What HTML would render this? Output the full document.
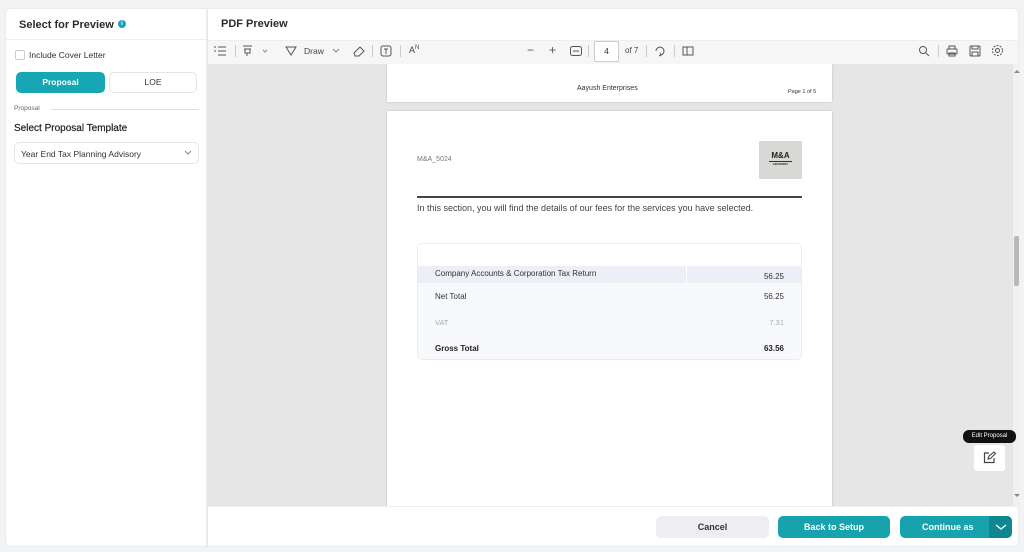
<!DOCTYPE html>
<html><head><meta charset="utf-8"><style>
*{box-sizing:border-box;margin:0;padding:0}
body{width:1024px;height:552px;background:#f2f3f5;font-family:"Liberation Sans",sans-serif;position:relative;overflow:hidden;color:#222}
.abs{position:absolute}
.left{left:5px;top:8px;width:202px;height:539px;background:#fff;border:1px solid #e9ebee;border-radius:6px 0 0 6px}
.right{left:207px;top:8px;width:812px;height:539px;background:#fff;border:1px solid #e9ebee;border-left:1px solid #e6e8eb;border-radius:0 6px 6px 0}
.btn{position:absolute;top:516px;height:22px;border-radius:5px;font-size:9px;font-weight:bold;display:flex;align-items:center;justify-content:center}
svg{position:absolute}
</style></head><body>
<div class="abs left">
  <div style="position:absolute;left:0;top:0;width:200px;height:31px;border-bottom:1px solid #eceef1"></div>
  <div class="abs" style="left:13px;top:10px;font-size:11px;font-weight:bold;color:#2b2b2b">Select for Preview</div>
  <div class="abs" style="left:112px;top:11px;width:8px;height:8px;border-radius:50%;background:#17a2b8;color:#fff;font-size:6px;font-weight:bold;text-align:center;line-height:8px">i</div>
  <div class="abs" style="left:9px;top:41px;width:10px;height:10px;border:1px solid #ccc;border-radius:2px"></div>
  <div class="abs" style="left:23px;top:41px;font-size:8.5px;color:#333">Include Cover Letter</div>
  <div class="abs" style="left:10px;top:63px;width:89px;height:21px;background:#17a6b3;border-radius:5px;color:#fff;font-size:8.5px;font-weight:bold;text-align:center;line-height:21px">Proposal</div>
  <div class="abs" style="left:103px;top:63px;width:88px;height:21px;border:1px solid #e3e5e8;border-radius:5px;color:#333;font-size:8.5px;text-align:center;line-height:19px">LOE</div>
  <div class="abs" style="left:8px;top:96px;font-size:6.5px;color:#666">Proposal</div>
  <div class="abs" style="left:45px;top:100px;width:148px;height:1px;background:#ddd"></div>
  <div class="abs" style="left:8px;top:114px;font-size:10px;color:#222;-webkit-text-stroke:0.2px #222">Select Proposal Template</div>
  <div class="abs" style="left:8px;top:133px;width:185px;height:22px;border:1px solid #e3e5e8;border-radius:5px;font-size:8.5px;color:#333;padding:6px 0 0 6px">Year End Tax Planning Advisory</div>
  <svg style="left:178px;top:141px" width="8" height="6"><path d="M1 1l3 3 3-3" stroke="#888" fill="none"/></svg>
</div>
<div class="abs right">
  <div class="abs" style="left:13px;top:9px;font-size:11px;font-weight:bold;color:#2b2b2b">PDF Preview</div>
</div>
<div class="abs" style="left:208px;top:40px;width:810px;height:24px;background:#f6f6f6;border-top:1px solid #eee"></div>
<svg style="left:214px;top:46px" width="13" height="10"><path d="M0 1h2M4 1h8M0 5h2M4 5h8M4 9h8" stroke="#555"/></svg>
<div class="abs" style="left:235px;top:45px;width:1px;height:12px;background:#ccc"></div>
<svg style="left:242px;top:45px" width="30" height="12"><path d="M1 1h9M2 4h7M3 4v4h5V4M5 8v3" stroke="#555" fill="none"/><path d="M21 5l2 2 2-2" stroke="#888" fill="none"/></svg>
<svg style="left:285px;top:45px" width="12" height="12"><path d="M1 2h10L6 10z" stroke="#555" fill="none"/></svg>
<div class="abs" style="left:304px;top:46px;font-size:8.5px;color:#444">Draw</div>
<svg style="left:332px;top:48px" width="8" height="6"><path d="M1 1l3 3 3-3" stroke="#888" fill="none"/></svg>
<svg style="left:352px;top:45px" width="13" height="12"><path d="M2 8l6-6 4 4-5 5H3z" stroke="#555" fill="none"/></svg>
<div class="abs" style="left:372px;top:45px;width:1px;height:12px;background:#ccc"></div>
<svg style="left:380px;top:45px" width="12" height="12"><rect x="1" y="1" width="10" height="10" rx="2" stroke="#555" fill="none"/><path d="M4 4h4M6 4v5" stroke="#555"/></svg>
<div class="abs" style="left:400px;top:45px;width:1px;height:12px;background:#ccc"></div>
<div class="abs" style="left:409px;top:45px;font-size:9px;color:#444">A<sup style="font-size:6px">N</sup></div>
<div class="abs" style="left:527px;top:43px;font-size:12px;color:#555">−</div>
<div class="abs" style="left:549px;top:43px;font-size:12px;color:#555">+</div>
<svg style="left:570px;top:46px" width="12" height="10"><rect x="0.5" y="0.5" width="11" height="9" rx="2" stroke="#555" fill="none"/><path d="M3 5h6" stroke="#555"/></svg>
<div class="abs" style="left:588px;top:45px;width:1px;height:12px;background:#ccc"></div>
<div class="abs" style="left:594px;top:41px;width:25px;height:21px;background:#fff;border:1px solid #ccc;border-radius:2px;font-size:8.5px;text-align:center;line-height:19px;color:#333">4</div>
<div class="abs" style="left:625px;top:46px;font-size:8px;color:#444">of 7</div>
<div class="abs" style="left:646px;top:45px;width:1px;height:12px;background:#ccc"></div>
<svg style="left:654px;top:45px" width="12" height="12"><path d="M2 6a4 4 0 1 1 5 4" stroke="#555" fill="none"/><path d="M6 8l1 2-2 1" stroke="#555" fill="none"/></svg>
<div class="abs" style="left:674px;top:45px;width:1px;height:12px;background:#ccc"></div>
<svg style="left:682px;top:45px" width="12" height="12"><rect x="1" y="2" width="10" height="8" stroke="#555" fill="none"/><path d="M5 2v8" stroke="#555"/></svg>
<svg style="left:918px;top:45px" width="12" height="12"><circle cx="5" cy="5" r="3.5" stroke="#555" fill="none"/><path d="M8 8l3 3" stroke="#555"/></svg>
<div class="abs" style="left:938px;top:45px;width:1px;height:12px;background:#ccc"></div>
<svg style="left:946px;top:45px" width="12" height="12"><rect x="1" y="4" width="10" height="5" rx="1" stroke="#555" fill="none"/><path d="M3 4V1h6v3M3 8h6v3H3z" stroke="#555" fill="none"/></svg>
<svg style="left:969px;top:45px" width="12" height="12"><rect x="1" y="1" width="10" height="10" rx="1" stroke="#555" fill="none"/><path d="M3 1v3h6V1M3 11V7h6v4" stroke="#555" fill="none"/></svg>
<svg style="left:991px;top:44px" width="13" height="13"><circle cx="6.5" cy="6.5" r="2" stroke="#555" fill="none"/><circle cx="6.5" cy="6.5" r="5" stroke="#555" fill="none" stroke-dasharray="2 1.2"/></svg>
<div class="abs" style="left:208px;top:64px;width:805px;height:442px;background:#e6e6e6;overflow:hidden">
  <div class="abs" style="left:179px;top:0;width:445px;height:38px;background:#fff;box-shadow:0 0 2px #bbb"></div>
  <div class="abs" style="left:369px;top:21px;font-size:7px;color:#333">Aayush Enterprises</div>
  <div class="abs" style="left:580px;top:25px;font-size:5.5px;color:#333">Page 1 of 5</div>
  <div class="abs" style="left:179px;top:47px;width:445px;height:420px;background:#fff;box-shadow:0 0 2px #bbb"></div>
</div>
<div class="abs" style="left:1013px;top:64px;width:7px;height:442px;background:#f1f1f1"></div>
<div class="abs" style="left:1014px;top:236px;width:5px;height:50px;background:#b8b8b8;border-radius:2px"></div>
<div class="abs" style="left:1014px;top:67px;width:0;height:0;border:3px solid transparent;border-bottom-color:#888"></div>
<div class="abs" style="left:1014px;top:494px;width:0;height:0;border:3px solid transparent;border-top-color:#888"></div>
<div class="abs" style="left:417px;top:156px;font-size:7px;color:#777">M&amp;A_5024</div>
<div class="abs" style="left:759px;top:141px;width:43px;height:38px;background:#d8d8d6;text-align:center;padding-top:11px;font-size:8px;font-weight:bold;color:#222;line-height:8px">M&amp;A<div style="font-size:3px;line-height:4px;border-top:1px solid #333;margin:1px 10px 0">ADVISORY</div></div>
<div class="abs" style="left:417px;top:196px;width:385px;height:2px;background:#444"></div>
<div class="abs" style="left:417px;top:203px;font-size:9px;color:#444">In this section, you will find the details of our fees for the services you have selected.</div>
<div class="abs" style="left:417px;top:243px;width:385px;height:117px;border:1px solid #ececf0;border-radius:5px;overflow:hidden;background:#f8f9fc">
  <div style="height:22px;background:#fff"></div>
  <div style="height:17px;background:#eceef8;position:relative;font-size:8px;color:#333"><span style="position:absolute;left:17px;top:3px">Company Accounts &amp; Corporation Tax Return</span><span style="position:absolute;left:268px;top:0;width:1px;height:17px;background:#fff"></span><span style="position:absolute;right:17px;top:6px">56.25</span></div>
  <div style="height:26px;position:relative;font-size:8px;color:#333"><span style="position:absolute;left:17px;top:9px">Net Total</span><span style="position:absolute;right:17px;top:9px">56.25</span></div>
  <div style="height:26px;position:relative;font-size:7.5px;color:#aaa"><span style="position:absolute;left:17px;top:9px">VAT</span><span style="position:absolute;right:17px;top:9px">7.31</span></div>
  <div style="height:26px;position:relative;font-size:8px;color:#222;font-weight:bold"><span style="position:absolute;left:17px;top:9px">Gross Total</span><span style="position:absolute;right:17px;top:9px">63.56</span></div>
</div>
<div class="abs" style="left:963px;top:430px;width:53px;height:13px;background:#111;border-radius:6px;color:#fff;font-size:6px;text-align:center;line-height:13px">Edit Proposal</div>
<div class="abs" style="left:974px;top:445px;width:31px;height:26px;background:#fff;border-radius:3px"></div>
<svg style="left:983px;top:451px" width="13" height="13"><path d="M6 2H1.5v9.5H11V7" stroke="#444" fill="none" stroke-width="1.2"/><path d="M5 8l1-3 5-4 1.5 1.5-5 5z" stroke="#444" fill="none" stroke-width="1.1"/></svg>
<div class="abs" style="left:208px;top:506px;width:810px;height:1px;background:#eceef1"></div>
<div class="btn" style="left:656px;width:113px;background:#eceef1;color:#333">Cancel</div>
<div class="btn" style="left:778px;width:112px;background:#17a2ad;color:#fff">Back to Setup</div>
<div class="btn" style="left:900px;width:112px;background:#17a2ad;color:#fff;justify-content:flex-start;padding-left:22px;overflow:hidden">Continue as<div style="position:absolute;right:0;top:0;width:23px;height:22px;background:#0f8690"></div></div>
<svg style="left:995px;top:524px" width="12" height="7"><path d="M1 1l5 4 5-4" stroke="#fff" fill="none" stroke-width="1.3"/></svg>
</body></html>
